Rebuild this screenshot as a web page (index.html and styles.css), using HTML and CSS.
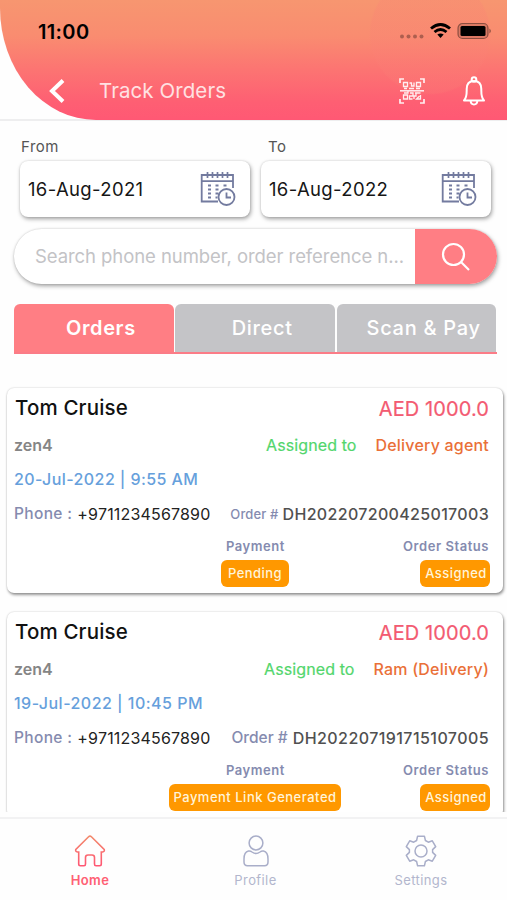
FILE: index.html
```html
<!DOCTYPE html>
<html lang="en">
<head>
<meta charset="utf-8">
<meta name="viewport" content="width=device-width, initial-scale=1">
<title>Track Orders</title>
<link rel="stylesheet" href="styles.css">
</head>
<body>
<svg class="defs" aria-hidden="true">
  <defs>
    <symbol id="calendar" viewBox="0 0 36 36">
      <g fill="none" stroke="#737b9f" stroke-width="1.800">
        <path d="M18 30.500H1.700V4H33V17M1.700 10.200H33"/>
        <path d="M7.500 1v6M12.500 1v6M17.500 1v6M22.500 1v6M27.500 1v6" stroke-width="1.700"/>
        <path d="M8 14.500h3M15.500 14.500h3M23.500 14.500h3M8 18.500h3M15.500 18.500h3M8 22.500h3M15.500 22.500h3M8 26.500h3M15.500 26.500h2" stroke-width="2"/>
        <circle cx="26.500" cy="26" r="8"/>
        <path d="M26.500 21.500V26.500H31"/>
      </g>
    </symbol>
  </defs>
</svg>
<div class="app">
  <header class="header">
    <div class="hero">
      <div class="status">
        <span class="time">11:00</span>
        <svg class="signals" viewBox="0 0 92 18" width="92" height="18">
          <g fill="#000" opacity=".3"><circle cx="3" cy="14.500" r="2"/><circle cx="9.500" cy="14.500" r="2"/><circle cx="16" cy="14.500" r="2"/><circle cx="22.500" cy="14.500" r="2"/></g>
          <g fill="none" stroke="#000" stroke-width="2.900"><path d="M32 6.500Q41.500-1.500 51 6.500"/><path d="M35.500 10Q41.500 5 47.500 10"/></g>
          <path d="M38.300 12.600Q41.500 10.300 44.700 12.600L41.500 16z"/>
          <rect x="59" y="1.500" width="30" height="15" rx="4.500" fill="#000" fill-opacity=".12" stroke="#000" stroke-opacity=".4" stroke-width="1.200"/>
          <rect x="61.500" y="4" width="25" height="10" rx="1.500"/>
          <path d="M90.500 6.500q2.500 2.500 0 5z" opacity=".5"/>
        </svg>
      </div>
      <div class="titlebar">
        <svg class="back" width="18" height="26" viewBox="0 0 18 26"><path d="M15 2.500 4 13 15 23.500" fill="none" stroke="#fff" stroke-width="4"/></svg>
        <h1>Track Orders</h1>
        <svg class="scan" width="26" height="26" viewBox="0 0 26 26" fill="none" stroke="#ffeef0" stroke-width="1.300">
          <path d="M1 5V1H5M21 1h4V5M1 21v4H5M21 25h4V21" stroke-width="1.700"/>
          <path d="M1 12.800H25" stroke-width="1.500"/>
          <path d="M4.500 4.500h4v4h-4zM17.500 4.500h4v4h-4zM4.500 17h4v4h-4zM10.500 5h2v3h2.500V4.500M5 10.500h3M10 10.500h5M17 10.500h4M5 15h4V13M11 15h3V18h-3.500v3h3M16 15h5.500M17 15v3h-2v3M21.500 17v4h-4l3-3"/>
        </svg>
        <svg class="bell" width="24" height="30" viewBox="0 0 24 30" fill="none" stroke="#fff" stroke-width="2" stroke-linejoin="round">
          <path d="M2 24.500C5 21.500 4.700 18 4.700 13C4.700 8 7.500 5 12 5S19.300 8 19.300 13C19.300 18 19 21.500 22 24.500zM8.500 24.500C9 29.800 15 29.800 15.500 24.500"/><circle cx="12" cy="3.500" r="2.300"/>
        </svg>
      </div>
    </div>
  </header>

  <section class="filters">
    <div class="dates">
      <label class="date"><span class="caption">From</span><span class="field"><span>16-Aug-2021</span><svg width="36" height="36"><use href="#calendar"/></svg></span></label>
      <label class="date"><span class="caption">To</span><span class="field"><span>16-Aug-2022</span><svg width="36" height="36"><use href="#calendar"/></svg></span></label>
    </div>
    <div class="search">
      <span class="placeholder">Search phone number, order reference n...</span>
      <span class="go"><svg width="30" height="30" viewBox="0 0 30 30" fill="none" stroke="#fff" stroke-width="2.200"><circle cx="12.500" cy="12.500" r="10.500"/><path d="M20 20l8 8"/></svg></span>
    </div>
    <nav class="tabs">
      <span class="tab active">Orders</span>
      <span class="tab">Direct</span>
      <span class="tab last">Scan &amp; Pay</span>
    </nav>
  </section>

  <main class="orders">
    <article class="card">
      <div class="row top"><h2>Tom Cruise</h2><span class="amount">AED 1000.0</span></div>
      <div class="row agentrow"><span class="shop">zen4</span><span class="assign">Assigned to</span><span class="agent">Delivery agent</span></div>
      <div class="row when when-a">20-Jul-2022 | 9:55 AM</div>
      <div class="row contact"><span class="label">Phone :</span><span class="phone">+9711234567890</span><span class="ordlabel small">Order #</span><span class="ref">DH202207200425017003</span></div>
      <div class="row heads"><span class="paycol">Payment</span><span>Order Status</span></div>
      <div class="row badges"><span class="slot"><span class="badge pending">Pending</span></span><span class="badge assigned">Assigned</span></div>
    </article>
    <article class="card second">
      <div class="row top"><h2>Tom Cruise</h2><span class="amount">AED 1000.0</span></div>
      <div class="row agentrow"><span class="shop">zen4</span><span class="assign">Assigned to</span><span class="agent ram">Ram (Delivery)</span></div>
      <div class="row when when-b">19-Jul-2022 | 10:45 PM</div>
      <div class="row contact"><span class="label">Phone :</span><span class="phone">+9711234567890</span><span class="ordlabel">Order #</span><span class="ref ref-b">DH202207191715107005</span></div>
      <div class="row heads"><span class="paycol">Payment</span><span>Order Status</span></div>
      <div class="row badges"><span class="slot"><span class="badge link">Payment Link Generated</span></span><span class="badge assigned">Assigned</span></div>
    </article>
  </main>

  <footer class="bottom">
    <a class="item home">
      <svg width="32" height="32" viewBox="0 0 32 32"><defs><linearGradient id="warm" x1="0" y1="0" x2="0" y2="1"><stop offset="0" stop-color="#f28a6c"/><stop offset="1" stop-color="#ff5673"/></linearGradient></defs><path d="M14.600 1.800Q16 .4 17.400 1.800L30.200 14.400Q31 16.500 28.500 17H27.300V29Q27.300 30.700 25.600 30.700H22Q20.500 30.700 20.500 29V22.500Q20.500 20 18 20H14Q11.500 20 11.500 22.500V29Q11.500 30.700 10 30.700H6.400Q4.700 30.700 4.700 29V17H3.500Q1 16.500 1.800 14.400z" fill="none" stroke="url(#warm)" stroke-width="1.600"/></svg>
      <span>Home</span>
    </a>
    <a class="item profile">
      <svg width="32" height="32" viewBox="0 0 32 32" fill="none" stroke="#a9aec9" stroke-width="1.500"><circle cx="16" cy="8" r="6.900"/><path d="M8.500 16Q4 17 4 24V27Q4 30.700 7.500 30.700H24.500Q28 30.700 28 27V24Q28 17 23.500 16Q21.500 15.700 20 17Q16 20 12 17Q10.500 15.700 8.500 16z"/></svg>
      <span>Profile</span>
    </a>
    <a class="item settings">
      <svg width="32" height="32" viewBox="0 0 32 32" fill="none" stroke="#a9aec9" stroke-width="1.500" stroke-linejoin="round"><path d="M12.600 1.200H19.400L20.400 5.500L23.300 7.200L27.300 5.800L30.700 11.600L27.600 14.600V17.400L30.700 20.400L27.300 26.200L23.300 24.800L20.400 26.500L19.400 30.800H12.600L11.600 26.500L8.700 24.800L4.700 26.200L1.300 20.400L4.400 17.400V14.600L1.300 11.600L4.700 5.800L8.700 7.200L11.600 5.500z"/><circle cx="16" cy="16" r="6"/></svg>
      <span>Settings</span>
    </a>
  </footer>
</div>
</body>
</html>
```

FILE: styles.css
```css
* { box-sizing: border-box; }
body { margin: 0; background: #fefefe; font-family: Inter, "Liberation Sans", sans-serif; }
.defs { display: block; width: 0; height: 0; }
svg { display: block; flex: none; }
h1, h2 { margin: 0; font-weight: 400; }
.app { width: 507px; height: 900px; display: flex; flex-direction: column; overflow: hidden; white-space: nowrap; }

.header { height: 121px; flex: none; border-bottom: 2px solid #eeeeef; }
.hero { height: 120px; border-bottom-left-radius: 96px 112px; overflow: hidden;
  background: radial-gradient(circle at 430px 34px, rgba(250,128,118,.25) 0 59px, transparent 61px), linear-gradient(#f79670 0, #f98c70 30%, #fc7572 57%, #fe5f73 85%, #ff5874 100%); }
.status { height: 62px; padding: 0 16px 0 38px; display: flex; justify-content: space-between; align-items: center; }
.time { font-size: 20px; font-weight: 600; letter-spacing: .35px; padding-top: 2px; }
.titlebar { height: 58px; padding: 0 21px 0 48px; display: flex; align-items: center; }
h1 { margin-left: 33px; color: #ffe1e2; font-size: 20.500px; letter-spacing: .08px; padding-bottom: 1px; }
.scan { margin-left: auto; }
.bell { margin-left: 37px; }

.filters { height: 262px; flex: none; padding: 13px 10px 0 14px; }
.dates { display: flex; gap: 11px; padding-left: 6px; }
.date { width: 230px; }
.caption { display: block; height: 27px; line-height: 25px; padding-left: 1px; font-size: 15px; letter-spacing: .5px; color: #555; }
.date + .date .caption { padding-left: 7px; }
.field { height: 56px; display: flex; justify-content: space-between; align-items: center; padding: 0 14px 0 8px; border-radius: 8px; background: #fff; font-size: 18.500px; letter-spacing: .35px; color: #161616; box-shadow: 1px 2px 4px rgba(0,0,0,.36), 0 0 2px rgba(0,0,0,.15); }
.search { height: 55px; margin-top: 12px; width: 483px; display: flex; align-items: center; border-radius: 28px; overflow: hidden; background: #fff; box-shadow: 1px 2px 4px rgba(0,0,0,.36), 0 0 2px rgba(0,0,0,.15); }
.placeholder { width: 401px; padding: 0 0 2px 21px; color: #c3c3c6; font-size: 18.500px; letter-spacing: -.07px; }
.go { flex: 1; height: 55px; background: #ff7e84; display: flex; align-items: center; justify-content: center; }
.tabs { margin-top: 20px; width: 482.500px; height: 50px; display: flex; gap: 1.500px; border-bottom: 2px solid #fb7c87; }
.tab { flex: 1; display: flex; align-items: center; justify-content: center; padding-left: 14px; background: #c4c4c7; color: #fff; border-radius: 6px 6px 0 0; font-size: 20px; font-weight: 500; letter-spacing: .7px; }
.active { background: #ff7e84; font-weight: 600; letter-spacing: .6px; }

.orders { flex: 1; min-height: 0; max-height: 429px; overflow: hidden; padding: 5px 4px 0 7px; }
.card { height: 205px; margin-bottom: 19px; padding: 0 14px 0 7px; border-radius: 7px; background: #fff; box-shadow: 1px 2px 3px rgba(0,0,0,.4), 0 0 2px rgba(0,0,0,.2); }
.row { display: flex; align-items: center; }
.top { height: 39px; justify-content: space-between; }
h2 { font-size: 20.500px; font-weight: 500; color: #111; padding: 0 0 1px 1px; letter-spacing: .15px; }
.amount { font-size: 20px; color: #f35b72; padding-top: 2px; letter-spacing: .1px; -webkit-text-stroke: .2px; }
.agentrow { height: 36px; font-size: 16px; }
.shop { font-weight: 600; color: #858585; margin-right: auto; letter-spacing: 0; }
.assign { color: #52d66c; letter-spacing: .1px; margin-right: 19px; -webkit-text-stroke: .2px; }
.agent { font-weight: 500; color: #ea7038; letter-spacing: .2px; }
.when { height: 32px; font-size: 16px; font-weight: 500; color: #66a0dc; letter-spacing: .42px; }
.when-b { letter-spacing: .48px; }
.contact { height: 37px; font-size: 15.500px; }
.label, .ordlabel, .heads { color: #858baf; font-weight: 500; }
.label { letter-spacing: .35px; padding-bottom: 1px; }
.phone { font-size: 16px; color: #222; margin-left: 5px; letter-spacing: .18px; padding-top: 1px; }
.ordlabel { margin-left: auto; margin-right: 4px; }
.small { font-size: 13px; letter-spacing: .15px; }
.ref { font-size: 16px; font-weight: 500; color: #505050; letter-spacing: .33px; }
.ref-b { letter-spacing: .43px; margin-left: 1px; }
.heads { height: 27px; font-size: 13px; font-weight: 600; justify-content: space-between; letter-spacing: .55px; }
.paycol { padding-left: 212px; }
.badges { height: 27px; margin-top: 1px; justify-content: space-between; margin-right: -1px; }
.slot { width: 327px; display: flex; justify-content: center; padding-left: 155px; }
.badge { height: 27px; padding-bottom: 1px; display: flex; align-items: center; justify-content: center; background: #ff9800; color: #fff4d9; border-radius: 6px; font-size: 13px; font-weight: 500; letter-spacing: .45px; }
.pending { width: 68px; flex: none; }
.assigned { width: 70px; padding-left: 2px; }
.link { width: 172px; flex: none; letter-spacing: .5px; }

.bottom { height: 83px; flex: none; margin-top: auto; border-top: 2px solid #f2f2f3; background: #fefefe; display: flex; justify-content: space-between; padding: 16px 46px 0 50px; font-size: 13px; color: #b2b6cd; }
.item { width: 80px; display: flex; flex-direction: column; align-items: center; gap: 4px; letter-spacing: .4px; line-height: 18px; }
.home { color: #ff6074; font-weight: 600; }
```
